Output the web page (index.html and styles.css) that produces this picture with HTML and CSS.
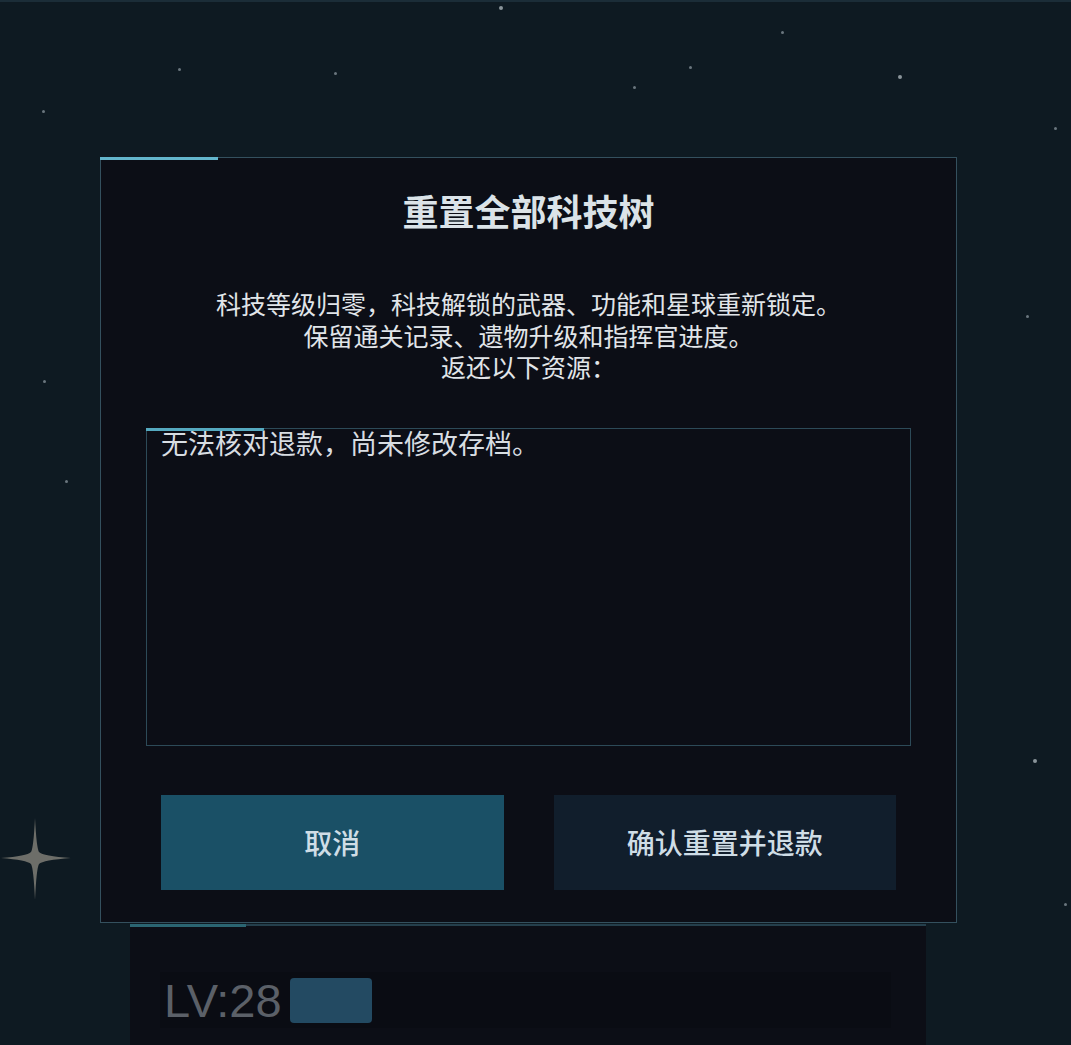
FILE: index.html
```html
<!DOCTYPE html>
<html lang="zh-CN">
<head>
  <meta charset="UTF-8" />
  <meta name="viewport" content="width=device-width, initial-scale=1.0"/>
  <title>重置全部科技树</title>
  <link rel="stylesheet" href="styles.css">
</head>
<body>
  <div class="sky">
    <span class="star" style="left:499px;top:6px"></span>
    <span class="star small" style="left:178px;top:68px"></span>
    <span class="star small" style="left:334px;top:72px"></span>
    <span class="star small" style="left:633px;top:86px"></span>
    <span class="star small" style="left:781px;top:31px"></span>
    <span class="star" style="left:898px;top:75px"></span>
    <span class="star small" style="left:689px;top:66px"></span>
    <span class="star small" style="left:42px;top:110px"></span>
    <span class="star small" style="left:1054px;top:127px"></span>
    <span class="star small" style="left:1026px;top:315px"></span>
    <span class="star small" style="left:43px;top:380px"></span>
    <span class="star small" style="left:65px;top:480px"></span>
    <span class="star" style="left:1033px;top:759px"></span>
    <span class="star small" style="left:1064px;top:903px"></span>

    <svg class="sparkle" width="76" height="100" viewBox="0 0 76 100">
      <path d="M36 10 Q37.5 40 40 44 Q44 48 72 50 Q44 52 40 56 Q37.5 60 36 92 Q34.5 60 32 56 Q28 52 2 50 Q28 48 32 44 Q34.5 40 36 10 Z" fill="#6d6e69"/>
    </svg>
  </div>

  <div class="panel">
    <div class="panel-row">
      <span class="level">LV:28</span>
      <span class="level-tag"></span>
    </div>
  </div>

  <div class="dialog">
    <h2 class="dialog-title">重置全部科技树</h2>
    <div class="dialog-text">
      <div class="line">科技等级归零，科技解锁的武器、功能和星球重新锁定。</div>
      <div class="line">保留通关记录、遗物升级和指挥官进度。</div>
      <div class="line">返还以下资源：</div>
    </div>
    <div class="refund-box">
      <p class="refund-msg">无法核对退款，尚未修改存档。</p>
    </div>
    <div class="dialog-actions">
      <button class="btn btn-cancel">取消</button>
      <button class="btn btn-confirm">确认重置并退款</button>
    </div>
  </div>
</body>
</html>
```

FILE: styles.css
```css
body {
  margin: 0;
  height: 1045px;
  overflow: hidden;
  background: linear-gradient(#1b2d38 0 2px, #0e1a22 2px);
  font-family: "Noto Sans CJK SC", "Noto Sans", sans-serif;
  position: relative;
}

.sky {
  position: absolute;
  inset: 0;
}

.star {
  position: absolute;
  width: 4px;
  height: 4px;
  border-radius: 50%;
  background: #8a949a;
}

.star.small {
  width: 3px;
  height: 3px;
  background: #6a767e;
}

.sparkle {
  position: absolute;
  left: -1px;
  top: 808px;
}

/* underlying page panel */
.panel {
  margin: 924px 0 0 130px;
  width: 796px;
  height: 140px;
  background: #0c0e16;
  border-top: 2px solid #253f4c;
  position: relative;
  padding: 46px 35px 0 30px;
  box-sizing: border-box;
}

.panel::before {
  content: "";
  position: absolute;
  left: 0;
  top: -2px;
  width: 116px;
  height: 3px;
  background: #2b6572;
}

.panel-row {
  display: flex;
  align-items: center;
  gap: 8px;
  background: #0a0c13;
  height: 56px;
  padding-left: 4px;
}

.level {
  font-family: "Liberation Sans", Arial, sans-serif;
  font-size: 47px;
  color: #5b6068;
  line-height: 1;
}

.level-tag {
  width: 82px;
  height: 45px;
  border-radius: 4px;
  background: #234a62;
}

/* dialog */
.dialog {
  position: absolute;
  left: 100px;
  top: 157px;
  width: 857px;
  height: 766px;
  box-sizing: border-box;
  background: #0c0e16;
  border: 1px solid #34505e;
  padding: 30px 45px 0;
  text-align: center;
}

.dialog::before {
  content: "";
  position: absolute;
  left: -1px;
  top: -1px;
  width: 118px;
  height: 3px;
  background: #63b6cd;
}

.dialog-title {
  margin: 0;
  font-size: 36px;
  line-height: 44px;
  font-weight: 700;
  color: #dbe3e8;
}

.dialog-text {
  margin-top: 56px;
  font-size: 25px;
  color: #e1e5e9;
}

.dialog-text .line {
  height: 31.5px;
  line-height: 31.5px;
}

.refund-box {
  margin-top: 45px;
  height: 316px;
  border: 1px solid #2d4a58;
  position: relative;
  text-align: left;
  padding: 0 14px;
}

.refund-box::before {
  content: "";
  position: absolute;
  left: -1px;
  top: -1px;
  width: 118px;
  height: 3px;
  background: #55a9c0;
}

.refund-msg {
  margin: 0;
  font-size: 27px;
  line-height: 28px;
  color: #d8dde2;
}

.dialog-actions {
  display: flex;
  gap: 50px;
  margin: 49px 15px 0;
}

.btn {
  flex: 1;
  height: 95px;
  border: none;
  font-family: inherit;
  font-size: 28px;
  font-weight: 500;
  color: #cfdde6;
  cursor: pointer;
}

.btn-cancel {
  background: #1a5066;
}

.btn-confirm {
  background: #111e2c;
}
```
